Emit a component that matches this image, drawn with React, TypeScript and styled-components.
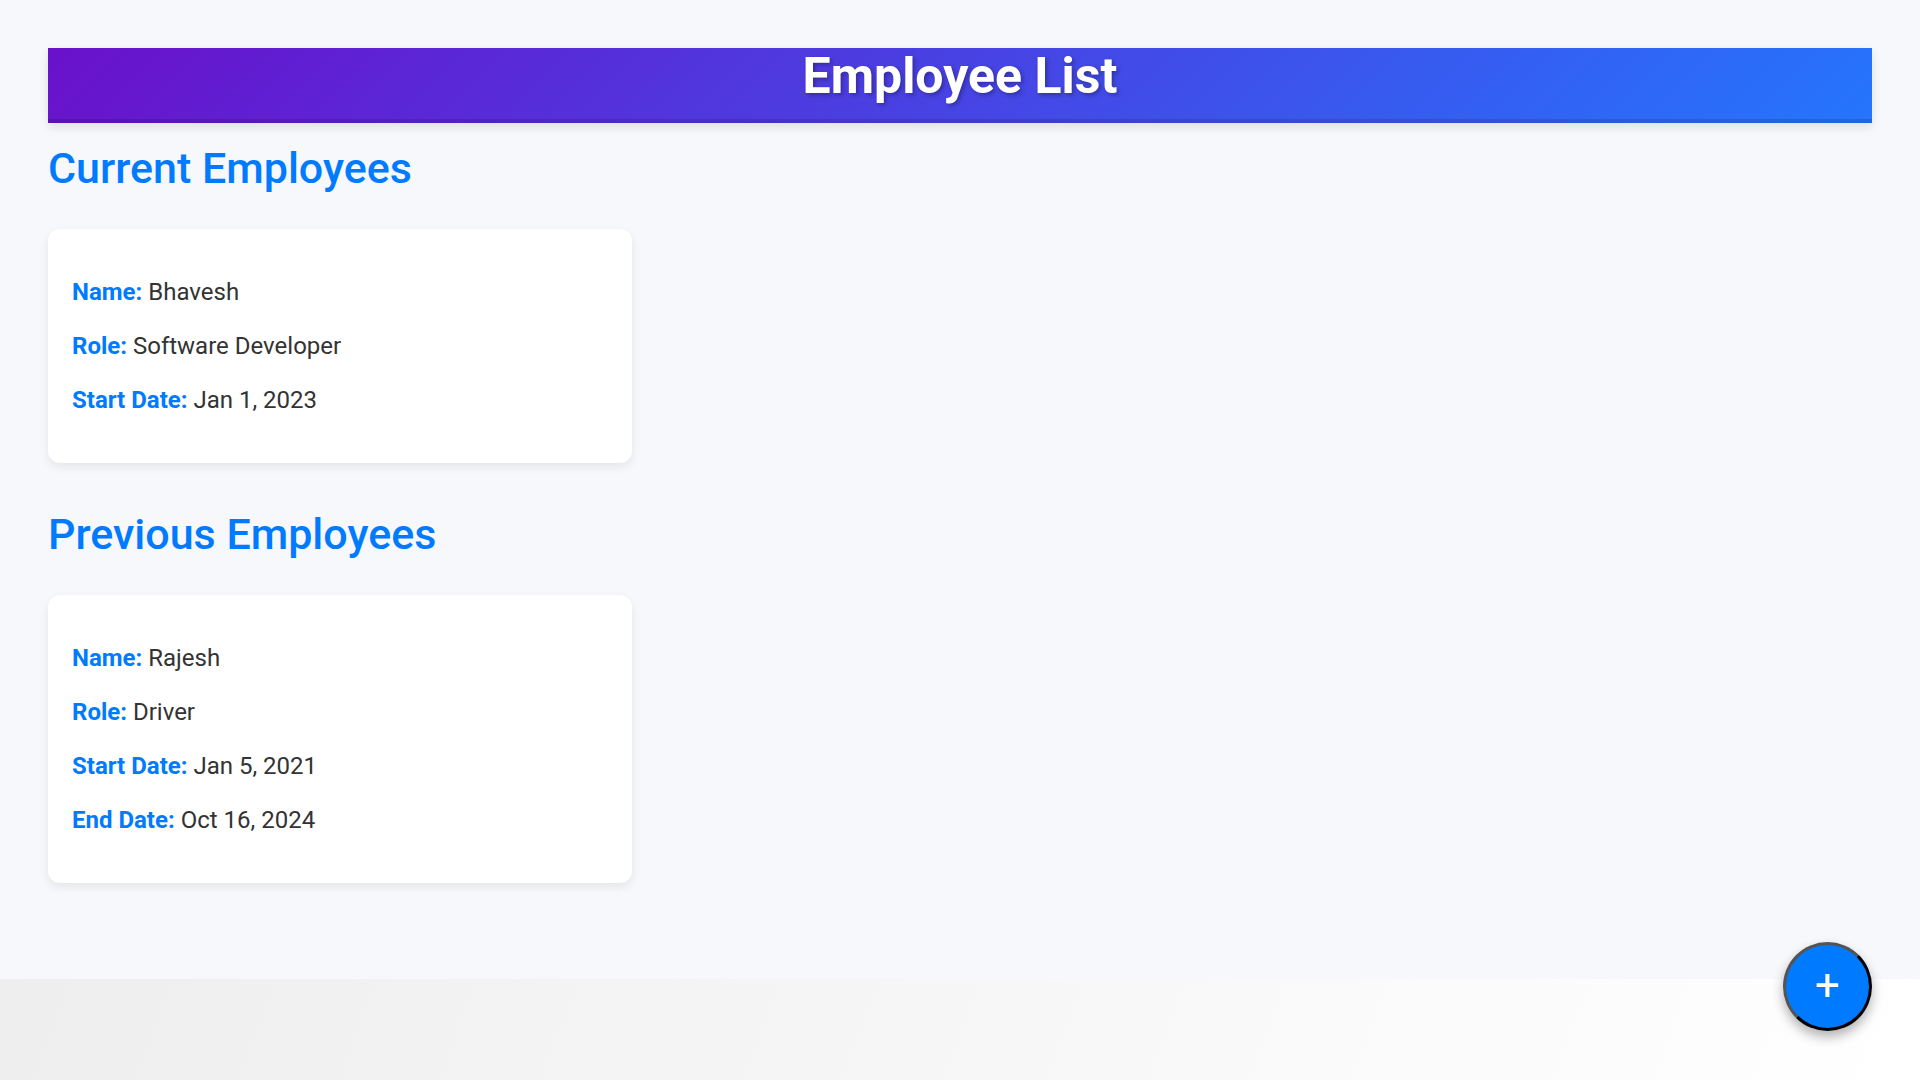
import React from "react";
import styled, { createGlobalStyle } from "styled-components";

const GlobalStyle = createGlobalStyle`
  html, body {
    margin: 0;
    padding: 0;
  }
  body {
    min-height: 100vh;
    font-family: Roboto, "Liberation Sans", Arial, sans-serif;
    background: linear-gradient(110deg, #ebebeb 0%, #ffffff 100%);
    background-attachment: fixed;
  }
`;

const Page = styled.div`
  background: #f7f8fc;
  padding: 48px 48px 96px;
`;

const Header = styled.header`
  background: linear-gradient(135deg, #6a11cb 0%, #2575fc 100%);
  border-bottom: 4px solid rgba(0, 0, 0, 0.1);
  box-shadow: 0 4px 10px rgba(0, 0, 0, 0.1);
  padding: 0 0 15px;
  text-align: center;
`;

const Title = styled.h1`
  margin: 0;
  font-size: 50px;
  line-height: 56px;
  font-weight: 700;
  color: #ffffff;
  text-shadow: 2px 2px 4px rgba(0, 0, 0, 0.3);
`;

const Section = styled.section<{ $gap?: number }>`
  margin-top: ${(p) => p.$gap ?? 0}px;
`;

const SectionTitle = styled.h2`
  margin: 20px 0 35px;
  font-size: 43px;
  font-weight: 500;
  line-height: 51px;
  color: #007bff;
`;

const Grid = styled.div`
  display: grid;
  grid-template-columns: repeat(3, 1fr);
  gap: 36px;
`;

const Card = styled.div`
  background: #ffffff;
  border-radius: 12px;
  box-shadow: 0 4px 10px rgba(0, 0, 0, 0.08);
  padding: 24px;
`;

const Row = styled.p`
  margin: 24px 0;
  font-size: 24px;
  line-height: 30px;
  color: #333333;
`;

const Label = styled.strong`
  font-weight: 700;
  color: #007bff;
`;

const Fab = styled.button`
  position: fixed;
  right: 48px;
  bottom: 49px;
  width: 89px;
  height: 89px;
  box-sizing: border-box;
  border-radius: 50%;
  border: 3px outset #000;
  background: #007bff;
  color: #ffffff;
  font-family: Roboto, "Liberation Sans", Arial, sans-serif;
  font-size: 44px;
  line-height: 1;
  display: flex;
  align-items: center;
  justify-content: center;
  padding: 0 0 4px;
  box-shadow: 0 6px 12px rgba(0, 0, 0, 0.3);
  cursor: pointer;
`;

type Employee = {
  name: string;
  role: string;
  start: string;
  end?: string;
};

const current: Employee[] = [
  { name: "Bhavesh", role: "Software Developer", start: "Jan 1, 2023" },
];

const previous: Employee[] = [
  { name: "Rajesh", role: "Driver", start: "Jan 5, 2021", end: "Oct 16, 2024" },
];

function EmployeeCard({ e }: { e: Employee }) {
  return (
    <Card>
      <Row>
        <Label>Name:</Label> {e.name}
      </Row>
      <Row>
        <Label>Role:</Label> {e.role}
      </Row>
      <Row>
        <Label>Start Date:</Label> {e.start}
      </Row>
      {e.end && (
        <Row>
          <Label>End Date:</Label> {e.end}
        </Row>
      )}
    </Card>
  );
}

export default function App() {
  return (
    <>
      <GlobalStyle />
      <Page>
        <Header>
          <Title>Employee List</Title>
        </Header>
        <Section>
          <SectionTitle>Current Employees</SectionTitle>
          <Grid>
            {current.map((e) => (
              <EmployeeCard key={e.name} e={e} />
            ))}
          </Grid>
        </Section>
        <Section $gap={46}>
          <SectionTitle>Previous Employees</SectionTitle>
          <Grid>
            {previous.map((e) => (
              <EmployeeCard key={e.name} e={e} />
            ))}
          </Grid>
        </Section>
      </Page>
      <Fab aria-label="Add employee">+</Fab>
    </>
  );
}
